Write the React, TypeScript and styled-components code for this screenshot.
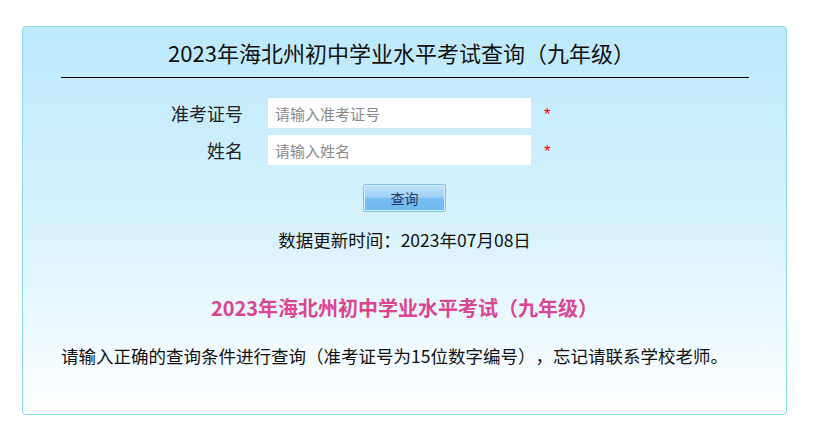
import React from "react";
import styled, { createGlobalStyle } from "styled-components";

const Global = createGlobalStyle`
  html, body { margin: 0; padding: 0; background: #ffffff; }
  body {
    font-family: "Noto Sans CJK SC", "Noto Sans", sans-serif;
    color: #111;
    text-spacing-trim: space-all;
  }
`;

const Page = styled.div`
  padding: 26px 0 0 22px;
`;

const Card = styled.div`
  box-sizing: border-box;
  width: 765px;
  height: 389px;
  border: 1px solid #86dae3;
  border-radius: 4px;
  background: linear-gradient(to bottom, #bce9fc 0%, #d6f2fd 50%, #ffffff 100%);
  display: flex;
  flex-direction: column;
`;

const Title = styled.h1`
  box-sizing: border-box;
  width: 688px;
  margin: 0 auto;
  padding: 9px 6px 9px 0;
  border-bottom: 1px solid #000;
  text-align: center;
  font-size: 22px;
  line-height: 32px;
  font-weight: 400;
  color: #111;
`;

const Form = styled.div`
  display: grid;
  grid-template-columns: 245px 263px 1fr;
  grid-auto-rows: 30px;
  row-gap: 7px;
  margin-top: 20px;
`;

const Label = styled.label`
  padding-right: 25px;
  text-align: right;
  font-size: 18px;
  line-height: 30px;
  color: #222;
`;

const Input = styled.input`
  box-sizing: border-box;
  width: 263px;
  height: 30px;
  border: none;
  outline: none;
  background: #fff;
  padding: 0 7px;
  font-family: inherit;
  font-size: 15px;
  color: #333;
  &::placeholder { color: #8a8a8a; }
`;

const Star = styled.span`
  padding-left: 13px;
  color: #f00;
  font-size: 17px;
  line-height: 30px;
  font-family: "Liberation Sans", sans-serif;
  transform: translateY(2px);
`;

const ButtonRow = styled.div`
  display: flex;
  justify-content: center;
  margin-top: 19px;
`;

const Button = styled.button`
  box-sizing: border-box;
  width: 83px;
  height: 28px;
  border: 1px solid #7fc0ec;
  border-radius: 2px;
  box-shadow: inset 0 0 0 1px #d8efff;
  background: linear-gradient(to bottom, #c2e3fa 0%, #9fd0f6 45%, #78bdf2 55%, #6fb8f1 100%);
  font-family: inherit;
  font-size: 14px;
  color: #1c3a66;
  padding: 0;
  cursor: pointer;
`;

const Updated = styled.p`
  margin: 16px 0 0;
  text-align: center;
  font-size: 17.5px;
  line-height: 24px;
  color: #111;
`;

const Notice = styled.h2`
  margin: 42px 0 0;
  text-align: center;
  font-size: 20px;
  line-height: 28px;
  font-weight: 700;
  color: #dc4590;
`;

const Hint = styled.p`
  margin: 22px 0 0 38px;
  font-size: 17.5px;
  line-height: 24px;
  color: #111;
`;

export default function App() {
  return (
    <>
      <Global />
      <Page>
        <Card>
          <Title>2023年海北州初中学业水平考试查询（九年级）</Title>
          <Form>
            <Label>准考证号</Label>
            <Input placeholder="请输入准考证号" />
            <Star>*</Star>
            <Label>姓名</Label>
            <Input placeholder="请输入姓名" />
            <Star>*</Star>
          </Form>
          <ButtonRow>
            <Button>查询</Button>
          </ButtonRow>
          <Updated>数据更新时间：2023年07月08日</Updated>
          <Notice>2023年海北州初中学业水平考试（九年级）</Notice>
          <Hint>请输入正确的查询条件进行查询（准考证号为15位数字编号），忘记请联系学校老师。</Hint>
        </Card>
      </Page>
    </>
  );
}
